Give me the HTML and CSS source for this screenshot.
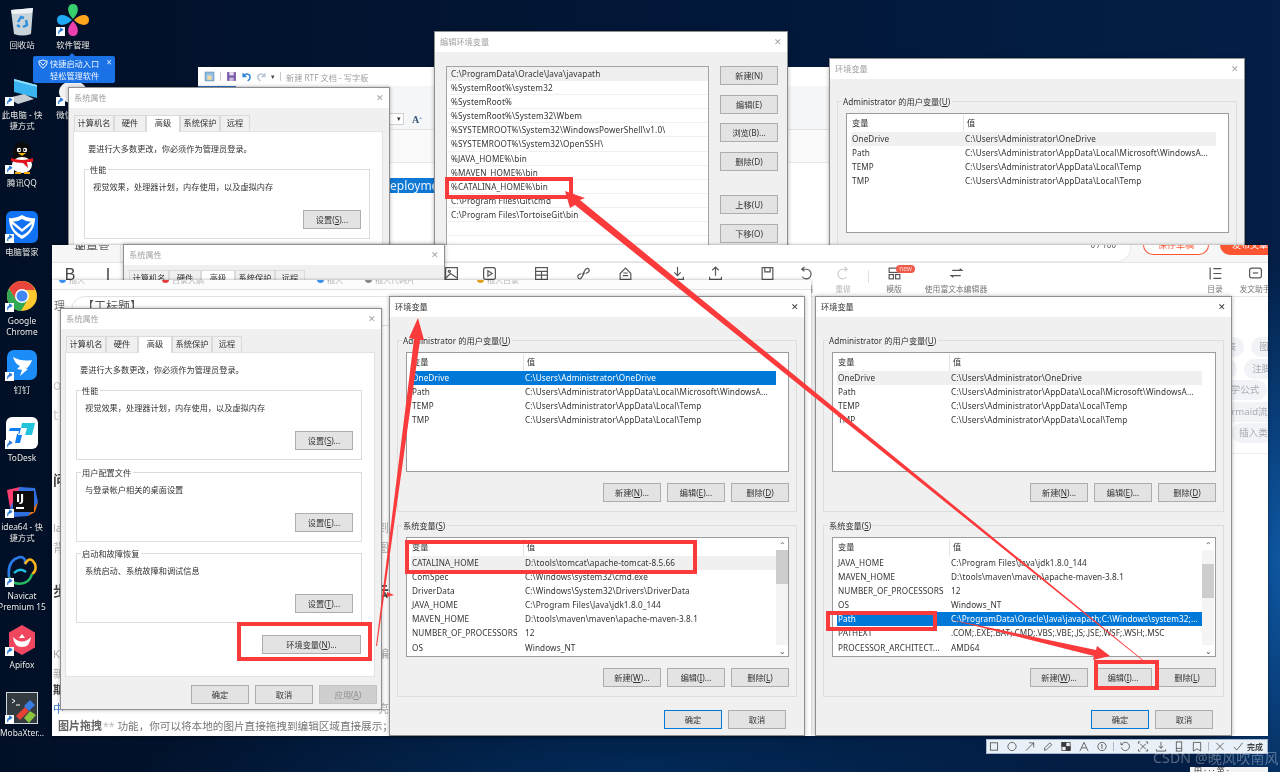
FILE: index.html
```html
<!DOCTYPE html>
<html lang="zh-CN">
<head>
<meta charset="utf-8">
<title>环境变量配置</title>
<link rel="stylesheet" href="styles.css">
</head>
<body>
<main class="desk">

<!-- desktop icons -->
<div class="di p-recycle"><svg class="ic" viewBox="0 0 32 32"><path d="M5 6 L27 4 L25 30 Q16 33 8 30 Z" fill="#c9d3da"/><path d="M5 6 L27 4 L26 9 L6 10 Z" fill="#eef2f5"/><path d="M12 18 L15 13 L18 14 M20 16 L21 21 L17 23 M14 23 L11 21" fill="none" stroke="#2f8fdc" stroke-width="2.4"/></svg><span>回收站</span></div>
<div class="di col2 p-soft"><svg class="ic" viewBox="0 0 32 32"><path d="M16 15 C9 8 10 0 16 0 C22 0 23 8 16 15Z" fill="#37cf6d"/><path d="M17 16 C24 9 32 10 32 16 C32 22 24 23 17 16Z" fill="#ffa51d"/><path d="M16 17 C23 24 22 32 16 32 C10 32 9 24 16 17Z" fill="#ee3fb0"/><path d="M15 16 C8 23 0 22 0 16 C0 10 8 9 15 16Z" fill="#1ea8f6"/></svg><svg class="sc" viewBox="0 0 10 10"><rect width="10" height="10" fill="#fff"/><path d="M3 8 V5 Q3 3 6 3 H5 M5 1 L8 3 L5 5Z" fill="#2a78d6" stroke="#2a78d6"/></svg><span>软件管理</span></div>
<div class="di p-pc"><svg class="ic" viewBox="0 0 32 32"><path d="M8 5 L31 11 V24 L8 18 Z" fill="#39b4f0"/><path d="M8 5 L31 11 V13 L8 7Z" fill="#8fdcff"/><path d="M2 24 L18 20 L28 25 L12 30Z" fill="#c5ccd2"/></svg><svg class="sc" viewBox="0 0 10 10"><rect width="10" height="10" fill="#fff"/><path d="M3 8 V5 Q3 3 6 3 H5 M5 1 L8 3 L5 5Z" fill="#2a78d6" stroke="#2a78d6"/></svg><span>此电脑 - 快<br>捷方式</span></div>
<div class="di col2 p-wx"><svg class="ic" viewBox="0 0 32 32"><ellipse cx="16" cy="18" rx="14" ry="11" fill="#f2f2f2"/><rect x="18" y="5" width="4" height="4" fill="#27c24c"/><rect x="26" y="5" width="4" height="4" fill="#27c24c"/></svg><svg class="sc" viewBox="0 0 10 10"><rect width="10" height="10" fill="#fff"/><path d="M3 8 V5 Q3 3 6 3 H5 M5 1 L8 3 L5 5Z" fill="#2a78d6" stroke="#2a78d6"/></svg><span>微信开发</span></div>
<div class="di p-qq"><svg class="ic" viewBox="0 0 32 32"><ellipse cx="16" cy="11" rx="9" ry="11" fill="#0b0b0b"/><ellipse cx="16" cy="23" rx="10" ry="8" fill="#fff"/><circle cx="13" cy="8" r="2.2" fill="#fff"/><circle cx="19" cy="8" r="2.2" fill="#fff"/><circle cx="13.5" cy="8" r="1" fill="#000"/><circle cx="18.5" cy="8" r="1" fill="#000"/><path d="M12 11 H20 L16 14Z" fill="#f6b400"/><path d="M5 16 Q16 20 27 16 L27 20 L21 20 L22 26 L17 21 Q10 21 5 19Z" fill="#e0141c"/><path d="M9 31 H15 M18 31 H24" stroke="#f6a800" stroke-width="2"/></svg><svg class="sc" viewBox="0 0 10 10"><rect width="10" height="10" fill="#fff"/><path d="M3 8 V5 Q3 3 6 3 H5 M5 1 L8 3 L5 5Z" fill="#2a78d6" stroke="#2a78d6"/></svg><span>腾讯QQ</span></div>
<div class="di p-mgr"><svg class="ic" viewBox="0 0 32 32"><rect width="32" height="32" rx="6" fill="#1173f3"/><path d="M16 4 Q22 8 29 7 Q29 21 16 28 Q3 21 3 7 Q10 8 16 4Z M16 8 Q11 11 7 10.5 L16 18 L25 10.5 Q21 11 16 8Z M6 13 Q7 20 16 24.500 Q25 20 26 13 L16 21Z" fill="#fff" fill-rule="evenodd"/></svg><svg class="sc" viewBox="0 0 10 10"><rect width="10" height="10" fill="#fff"/><path d="M3 8 V5 Q3 3 6 3 H5 M5 1 L8 3 L5 5Z" fill="#2a78d6" stroke="#2a78d6"/></svg><span>电脑管家</span></div>
<div class="di p-chrome"><svg class="ic" viewBox="0 0 32 32"><circle cx="16" cy="16" r="15" fill="#fdc92f"/><path d="M16 1 A15 15 0 0 0 3 8.500 L10 20 L16 10 H29 A15 15 0 0 0 16 1Z" fill="#e8453c"/><path d="M3 8.500 A15 15 0 0 0 15 31 L22 19 L10 20Z" fill="#31a853"/><circle cx="16" cy="16" r="7" fill="#fff"/><circle cx="16" cy="16" r="5.500" fill="#4285f4"/></svg><svg class="sc" viewBox="0 0 10 10"><rect width="10" height="10" fill="#fff"/><path d="M3 8 V5 Q3 3 6 3 H5 M5 1 L8 3 L5 5Z" fill="#2a78d6" stroke="#2a78d6"/></svg><span>Google<br>Chrome</span></div>
<div class="di p-ding"><svg class="ic" viewBox="0 0 32 32"><rect x="1" y="1" width="30" height="30" rx="7" fill="#1b8cf8"/><path d="M7 8 Q16 13 26 11 Q24 17 20 20 L22 20 L14 27 L16 21 L11 20 L14 17 Q9 15 7 8Z" fill="#fff"/></svg><svg class="sc" viewBox="0 0 10 10"><rect width="10" height="10" fill="#fff"/><path d="M3 8 V5 Q3 3 6 3 H5 M5 1 L8 3 L5 5Z" fill="#2a78d6" stroke="#2a78d6"/></svg><span>钉钉</span></div>
<div class="di p-todesk"><svg class="ic" viewBox="0 0 32 32"><rect width="32" height="32" rx="6" fill="#fff"/><path d="M16 6 H29 L26 18 H19 L21 11 H15Z" fill="#22c4dc"/><path d="M4 11 H15 L13.500 17 H11 L9 26 H14 L16 18 H12 L13 14 H3Z" fill="#0c7ff2"/></svg><svg class="sc" viewBox="0 0 10 10"><rect width="10" height="10" fill="#fff"/><path d="M3 8 V5 Q3 3 6 3 H5 M5 1 L8 3 L5 5Z" fill="#2a78d6" stroke="#2a78d6"/></svg><span>ToDesk</span></div>
<div class="di p-idea"><svg class="ic" viewBox="0 0 32 32"><path d="M1 4 L14 1 L20 8 L4 22Z" fill="#ff3d6e"/><path d="M14 1 L29 2 L32 16 L22 30 L8 31 L4 22Z" fill="#2f6fe0"/><path d="M22 30 L32 16 L29 26Z" fill="#f97a12"/><rect x="7" y="5" width="21" height="21" fill="#0c0c0c"/><text x="10" y="16" class="ij">IJ</text><rect x="10" y="21" width="8" height="2" fill="#fff"/></svg><svg class="sc" viewBox="0 0 10 10"><rect width="10" height="10" fill="#fff"/><path d="M3 8 V5 Q3 3 6 3 H5 M5 1 L8 3 L5 5Z" fill="#2a78d6" stroke="#2a78d6"/></svg><span>idea64 - 快<br>捷方式</span></div>
<div class="di p-nav"><svg class="ic" viewBox="0 0 32 32"><path d="M3 22 Q1 5 14 2 Q20 2 19 9" fill="none" stroke="#2a7be8" stroke-width="2.600"/><path d="M19 9 Q24 0 29 9 Q31 16 26 19" fill="none" stroke="#f8b31a" stroke-width="2.600"/><path d="M3 22 Q7 31 18 28 Q24 26 26 19" fill="none" stroke="#25b860" stroke-width="2.600"/><path d="M8 18 Q14 12 20 17" fill="none" stroke="#1fc4e4" stroke-width="2.400"/></svg><svg class="sc" viewBox="0 0 10 10"><rect width="10" height="10" fill="#fff"/><path d="M3 8 V5 Q3 3 6 3 H5 M5 1 L8 3 L5 5Z" fill="#2a78d6" stroke="#2a78d6"/></svg><span>Navicat<br>Premium 15</span></div>
<div class="di p-api"><svg class="ic" viewBox="0 0 32 32"><path d="M16 1 L29 8.500 V23.500 L16 31 L3 23.500 V8.500Z" fill="#f1465f"/><path d="M7 13 Q16 22 25 13 Q24 23 16 23 Q8 23 7 13Z M16 10 L19 14 L13 14Z" fill="#fff"/></svg><svg class="sc" viewBox="0 0 10 10"><rect width="10" height="10" fill="#fff"/><path d="M3 8 V5 Q3 3 6 3 H5 M5 1 L8 3 L5 5Z" fill="#2a78d6" stroke="#2a78d6"/></svg><span>Apifox</span></div>
<div class="di p-moba"><svg class="ic" viewBox="0 0 32 32"><rect x=".5" y=".5" width="31" height="31" fill="#333a40" stroke="#cfd4d8"/><path d="M6 7 L9 9 L6 11 M10 13 H14" fill="none" stroke="#fff"/><path d="M10 24 L19 15 L23 19 L14 28Z" fill="#e34234"/><path d="M18 14 L24 8 L29 13 L23 19Z" fill="#3a7de0"/><path d="M18 26 L24 19 L30 23 L23 31Z" fill="#8cc63f"/></svg><svg class="sc" viewBox="0 0 10 10"><rect width="10" height="10" fill="#fff"/><path d="M3 8 V5 Q3 3 6 3 H5 M5 1 L8 3 L5 5Z" fill="#2a78d6" stroke="#2a78d6"/></svg><span>MobaXter...</span></div>

<!-- tooltip -->
<aside class="tip">
  <svg class="tip-shield" viewBox="0 0 12 12"><path d="M6 1 Q8 2.500 11 2.500 Q11 8 6 11 Q1 8 1 2.500 Q4 2.500 6 1Z M3 4 L6 7.500 L9 4" fill="none" stroke="#fff" stroke-width="1.200"/></svg>
  <div class="tip-text">快捷启动入口<br>轻松管理软件</div>
  <span class="tip-x">×</span>
</aside>

<!-- wordpad -->
<section class="wordpad">
  <header class="wp-title">
    <svg class="wp-ic" viewBox="0 0 10 10"><rect x="1" y="1" width="8" height="8" fill="#8ec0e8" stroke="#6b8fae" stroke-width=".7"/><rect x="3" y="4" width="4" height="4" fill="#f1d9a8"/></svg>
    <i class="wp-sep"></i>
    <svg class="wp-ic" viewBox="0 0 10 10"><rect x="1" y="1" width="8" height="8" fill="#7a5aa8"/><rect x="3" y="1" width="4" height="3" fill="#e8e2f2"/><rect x="3" y="6" width="4" height="3" fill="#c8bedc"/></svg>
    <svg class="wp-ic" viewBox="0 0 10 10"><path d="M2 2 V5 H5 M2 5 Q5 1 8 4 Q9 7 6 9" fill="none" stroke="#2c83d8" stroke-width="1.400"/></svg>
    <svg class="wp-ic" viewBox="0 0 10 10"><path d="M8 2 V5 H5 M8 5 Q5 1 2 4 Q1 7 4 9" fill="none" stroke="#b9c8d8" stroke-width="1.400"/></svg>
    <span class="wp-down">▾</span><i class="wp-sep"></i>
    <span class="wp-name">新建 RTF 文档 - 写字板</span>
  </header>
  <div class="wp-tabs"><i class="wp-file"></i></div>
  <div class="wp-ribbon"><span class="wp-fontbox">▾</span><span class="wp-a">A<sup>+</sup></span></div>
  <div class="wp-ruler"></div>
  <div class="wp-doc"><span class="wp-sel">eployment</span></div>
</section>

<!-- back system properties -->
<section class="win sys sys-back">
  <header class="win-title dim"><span>系统属性</span><span class="x">✕</span></header>
  <div class="tabs"><span>计算机名</span><span class="t2">硬件</span><span class="on">高级</span><span>系统保护</span><span class="t3">远程</span></div>
  <div class="panel">
    <p class="intro">要进行大多数更改，你必须作为管理员登录。</p>
    <div class="grp"><span class="lg">性能</span><p>视觉效果，处理器计划，内存使用，以及虚拟内存</p><button class="btn">设置(<u>S</u>)...</button></div>
  </div>
</section>

<!-- edit env -->
<section class="win edit">
  <header class="win-title dim"><span>编辑环境变量</span><span class="x">✕</span></header>
  <div class="edit-body">
    <div class="edit-list">
      <div class="er cur">C:\ProgramData\Oracle\Java\javapath</div>
      <div class="er">%SystemRoot%\system32</div>
      <div class="er">%SystemRoot%</div>
      <div class="er">%SystemRoot%\System32\Wbem</div>
      <div class="er">%SYSTEMROOT%\System32\WindowsPowerShell\v1.0\</div>
      <div class="er">%SYSTEMROOT%\System32\OpenSSH\</div>
      <div class="er">%JAVA_HOME%\bin</div>
      <div class="er">%MAVEN_HOME%\bin</div>
      <div class="er">%CATALINA_HOME%\bin</div>
      <div class="er">C:\Program Files\Git\cmd</div>
      <div class="er">C:\Program Files\TortoiseGit\bin</div>
      <div class="er"></div>
      <div class="er"></div>
    </div>
    <div class="edit-btns">
      <button class="btn">新建(N)</button>
      <button class="btn">编辑(E)</button>
      <button class="btn">浏览(B)...</button>
      <button class="btn">删除(D)</button>
      <button class="btn gap-up">上移(U)</button>
      <button class="btn">下移(O)</button>
    </div>
  </div>
</section>

<!-- back env -->
<section class="win env env-back">
  <header class="win-title dim"><span>环境变量</span><span class="x">✕</span></header>
  <div class="env-body">
    <div class="grp2"><span class="lg">Administrator 的用户变量(<u>U</u>)</span>
      <div class="list">
        <div class="rows">
          <div class="r head"><span>变量</span><span>值</span></div>
          <div class="r cur"><span>OneDrive</span><span>C:\Users\Administrator\OneDrive</span></div>
          <div class="r"><span>Path</span><span>C:\Users\Administrator\AppData\Local\Microsoft\WindowsA...</span></div>
          <div class="r"><span>TEMP</span><span>C:\Users\Administrator\AppData\Local\Temp</span></div>
          <div class="r"><span>TMP</span><span>C:\Users\Administrator\AppData\Local\Temp</span></div>
        </div>
      </div>
    </div>
  </div>
</section>

<!-- editor window behind -->
<section class="editor">
  <div class="ed-top">
    <span class="ed-crumb">文章管理</span>
    <div class="ed-title"><span class="ed-count">0 / 100</span></div>
    <span class="ed-draft">保存草稿</span>
    <span class="ed-pub">发布文章</span>
  </div>
  <div class="tools">
    <div class="tool w38 big">B</div>
    <div class="tool w38 big">I</div>
    <div class="tool w38 g2"><svg viewBox="0 0 14 14"><rect x="1.500" y="1.500" width="11" height="11"/><circle cx="5" cy="5" r="1"/><path d="M2 11 L6 7 L12 11"/></svg><span>图片</span></div>
    <div class="tool w38"><svg viewBox="0 0 14 14"><rect x="1.500" y="1.500" width="11" height="11" rx="2"/><path d="M5.500 4.500 L9.500 7 L5.500 9.500Z"/></svg><span>视频</span></div>
    <div class="tool w42 g3"><svg viewBox="0 0 14 14"><rect x="1.500" y="1.500" width="11" height="11"/><path d="M1.500 5 H12.500 M1.500 8.500 H12.500 M7 5 V12.500"/></svg><span>表格</span></div>
    <div class="tool w42"><svg viewBox="0 0 14 14"><path d="M6 8 L9 3 Q11 1.500 12 3 Q13 5 11 6 L9 7 M8 6 L5 11 Q3 13 2 11 Q1 9 3 8 L5 7"/></svg><span>链接</span></div>
    <div class="tool w42"><svg viewBox="0 0 14 14"><path d="M2 7 L7 2 L12 7 V12.500 H2Z M4.500 9 H9.500 M5 6.500 H9"/></svg><span>摘要</span></div>
    <div class="tool w38 g3"><svg viewBox="0 0 14 14"><path d="M7 1 V9 M4 6 L7 9 L10 6 M1.500 10 V12.500 H12.500 V10"/></svg><span>导入</span></div>
    <div class="tool w38"><svg viewBox="0 0 14 14"><path d="M7 9 V1 M4 4 L7 1 L10 4 M1.500 10 V12.500 H12.500 V10"/></svg><span>导出</span></div>
    <div class="tool w38 g4"><svg viewBox="0 0 14 14"><rect x="2" y="1.500" width="10" height="11"/><path d="M4.500 1.500 V5.500 H9.500 V1.500"/></svg><span>保存</span></div>
    <div class="tool w38"><svg viewBox="0 0 14 14"><path d="M4 3 H8 A4.500 4.500 0 1 1 4 10 M6 1 L3.500 3 L6 5"/></svg><span>撤销</span></div>
    <div class="tool w38 off"><svg viewBox="0 0 14 14"><path d="M10 3 H6 A4.500 4.500 0 1 0 10 10 M8 1 L10.500 3 L8 5"/></svg><span>重做</span></div>
    <i class="tool-sep"></i>
    <div class="tool w40 badge-wrap"><svg viewBox="0 0 14 14"><rect x="2" y="2" width="10" height="4"/><rect x="2" y="8" width="4" height="4"/><rect x="8" y="8" width="4" height="4"/></svg><span>模版</span><b class="badge">new</b></div>
    <div class="tool w84"><svg viewBox="0 0 14 14"><path d="M3 4 H12 L10 2.500 M11 9 H2 L4 10.500"/></svg><span>使用富文本编辑器</span></div>
    <div class="tool w40 push"><svg viewBox="0 0 14 14"><path d="M2 1.500 V12.500 M5 2.500 H12.500 M5 7 H12.500 M5 11.500 H12.500"/></svg><span>目录</span></div>
    <div class="tool w40 last"><svg viewBox="0 0 14 14"><rect x="1.500" y="2" width="11" height="9" rx="2"/><path d="M4.500 6.500 H9.500"/></svg><span>发文助手</span></div>
  </div>
  <div class="chips">
    <div class="chip-row cr1"><span class="chip">图表</span><span class="chip">图片</span></div>
    <div class="chip-row cr2"><span class="chip">脚注</span><span class="chip">注脚</span></div>
    <div class="chip-row cr3"><span class="chip">数学公式</span></div>
    <div class="chip-row cr4"><span class="chip">mermaid流程图</span></div>
    <div class="chip-row cr5"><span class="chip">插入类</span></div>
    <hr class="chip-hr">
  </div>
</section>

<!-- mid system properties -->
<section class="win sys sys-mid">
  <header class="win-title dim"><span>系统属性</span><span class="x">✕</span></header>
  <div class="tabs"><span>计算机名</span><span class="t2">硬件</span><span class="on">高级</span><span>系统保护</span><span class="t3">远程</span></div>
</section>

<!-- editor layer in front -->
<section class="editor2">
  <div class="e2-strip">
    <span class="s1"><i class="dot blue"></i>插入</span>
    <span class="s2"><i class="dot red"></i>目录大纲</span>
    <span class="s3"><i class="dot blue"></i>插入</span>
    <span class="s4"><i class="dot gray"></i>插入代码片</span>
    <span class="s5"><i class="dot gold"></i>插入目录</span>
  </div>
  <div class="e2-head"><span class="e2-crumb">理</span><div class="e2-input">【工标题】</div></div>
  <div class="doc">
    <div class="dl d1"><span>oC</span></div>
    <div class="dl d2"><span>t</span></div>
    <div class="dl d3"><b>问</b></div>
    <div class="dl d4"><span>la</span><span>到</span></div>
    <div class="dl d5"><span>背</span><span>图</span></div>
    <div class="dl d6"><b>步</b><b>云</b></div>
    <div class="dl d7"><span>Ko</span><span>编</span></div>
    <div class="dl d8"><span>新</span></div>
    <div class="dl d9"><b>期</b></div>
    <div class="dl d10"><span class="lnk">中</span><span>亮</span></div>
    <div class="dl-last"><b>图片拖拽</b><span class="ast">**</span> 功能，你可以将本地的图片直接拖拽到编辑区域直接展示；</div>
  </div>
</section>

<!-- front system properties -->
<section class="win sys sys-front">
  <header class="win-title dim"><span>系统属性</span><span class="x">✕</span></header>
  <div class="tabs"><span>计算机名</span><span class="t2">硬件</span><span class="on">高级</span><span>系统保护</span><span class="t3">远程</span></div>
  <div class="panel">
    <p class="intro">要进行大多数更改，你必须作为管理员登录。</p>
    <div class="grp"><span class="lg">性能</span><p>视觉效果，处理器计划，内存使用，以及虚拟内存</p><button class="btn">设置(<u>S</u>)...</button></div>
    <div class="grp"><span class="lg">用户配置文件</span><p>与登录帐户相关的桌面设置</p><button class="btn">设置(<u>E</u>)...</button></div>
    <div class="grp"><span class="lg">启动和故障恢复</span><p>系统启动、系统故障和调试信息</p><button class="btn">设置(<u>T</u>)...</button></div>
    <button class="btn btn-env">环境变量(<u>N</u>)...</button>
  </div>
  <div class="foot"><button class="btn">确定</button><button class="btn">取消</button><button class="btn dis">应用(<u>A</u>)</button></div>
</section>

<!-- env A -->
<section class="win env env-a">
  <header class="win-title"><span>环境变量</span><span class="x">✕</span></header>
  <div class="env-body">
    <div class="grp2"><span class="lg">Administrator 的用户变量(<u>U</u>)</span>
      <div class="list"><div class="rows">
        <div class="r head"><span>变量</span><span>值</span></div>
        <div class="r sel"><span>OneDrive</span><span>C:\Users\Administrator\OneDrive</span></div>
        <div class="r"><span>Path</span><span>C:\Users\Administrator\AppData\Local\Microsoft\WindowsA...</span></div>
        <div class="r"><span>TEMP</span><span>C:\Users\Administrator\AppData\Local\Temp</span></div>
        <div class="r"><span>TMP</span><span>C:\Users\Administrator\AppData\Local\Temp</span></div>
      </div></div>
      <div class="btns"><button class="btn">新建(<u>N</u>)...</button><button class="btn">编辑(<u>E</u>)...</button><button class="btn">删除(<u>D</u>)</button></div>
    </div>
    <div class="grp2"><span class="lg">系统变量(<u>S</u>)</span>
      <div class="list"><div class="rows">
        <div class="r head"><span>变量</span><span>值</span></div>
        <div class="r cur"><span>CATALINA_HOME</span><span>D:\tools\tomcat\apache-tomcat-8.5.66</span></div>
        <div class="r"><span>ComSpec</span><span>C:\Windows\system32\cmd.exe</span></div>
        <div class="r"><span>DriverData</span><span>C:\Windows\System32\Drivers\DriverData</span></div>
        <div class="r"><span>JAVA_HOME</span><span>C:\Program Files\Java\jdk1.8.0_144</span></div>
        <div class="r"><span>MAVEN_HOME</span><span>D:\tools\maven\maven\apache-maven-3.8.1</span></div>
        <div class="r"><span>NUMBER_OF_PROCESSORS</span><span>12</span></div>
        <div class="r"><span>OS</span><span>Windows_NT</span></div>
      </div>
      <div class="sb"><span class="sb-a">⌃</span><div class="sb-track"><i class="thumb"></i></div><span class="sb-a">⌄</span></div></div>
      <div class="btns"><button class="btn">新建(<u>W</u>)...</button><button class="btn">编辑(<u>I</u>)...</button><button class="btn">删除(<u>L</u>)</button></div>
    </div>
    <div class="foot2"><button class="btn def">确定</button><button class="btn">取消</button></div>
  </div>
</section>

<!-- env B -->
<section class="win env env-b">
  <header class="win-title"><span>环境变量</span><span class="x">✕</span></header>
  <div class="env-body">
    <div class="grp2"><span class="lg">Administrator 的用户变量(<u>U</u>)</span>
      <div class="list"><div class="rows">
        <div class="r head"><span>变量</span><span>值</span></div>
        <div class="r cur"><span>OneDrive</span><span>C:\Users\Administrator\OneDrive</span></div>
        <div class="r"><span>Path</span><span>C:\Users\Administrator\AppData\Local\Microsoft\WindowsA...</span></div>
        <div class="r"><span>TEMP</span><span>C:\Users\Administrator\AppData\Local\Temp</span></div>
        <div class="r"><span>TMP</span><span>C:\Users\Administrator\AppData\Local\Temp</span></div>
      </div></div>
      <div class="btns"><button class="btn">新建(<u>N</u>)...</button><button class="btn">编辑(<u>E</u>)...</button><button class="btn">删除(<u>D</u>)</button></div>
    </div>
    <div class="grp2"><span class="lg">系统变量(<u>S</u>)</span>
      <div class="list"><div class="rows">
        <div class="r head"><span>变量</span><span>值</span></div>
        <div class="r"><span>JAVA_HOME</span><span>C:\Program Files\Java\jdk1.8.0_144</span></div>
        <div class="r"><span>MAVEN_HOME</span><span>D:\tools\maven\maven\apache-maven-3.8.1</span></div>
        <div class="r"><span>NUMBER_OF_PROCESSORS</span><span>12</span></div>
        <div class="r"><span>OS</span><span>Windows_NT</span></div>
        <div class="r sel"><span>Path</span><span>C:\ProgramData\Oracle\Java\javapath;C:\Windows\system32;...</span></div>
        <div class="r"><span>PATHEXT</span><span>.COM;.EXE;.BAT;.CMD;.VBS;.VBE;.JS;.JSE;.WSF;.WSH;.MSC</span></div>
        <div class="r"><span>PROCESSOR_ARCHITECT...</span><span>AMD64</span></div>
      </div>
      <div class="sb"><span class="sb-a">⌃</span><div class="sb-track sb-mid"><i class="thumb"></i></div><span class="sb-a">⌄</span></div></div>
      <div class="btns"><button class="btn">新建(<u>W</u>)...</button><button class="btn">编辑(<u>I</u>)...</button><button class="btn">删除(<u>L</u>)</button></div>
    </div>
    <div class="foot2"><button class="btn def">确定</button><button class="btn">取消</button></div>
  </div>
</section>

<!-- screenshot toolbar -->
<div class="shot">
  <svg viewBox="0 0 12 12"><rect x="2" y="2" width="8" height="8"/></svg>
  <svg viewBox="0 0 12 12"><circle cx="6" cy="6" r="4.500"/></svg>
  <svg viewBox="0 0 12 12"><path d="M1.500 10.500 L10 2 M5 2 H10 V7"/></svg>
  <svg viewBox="0 0 12 12"><path d="M2 10 L2.500 7.500 L8 2 L10 4 L4.500 9.500Z"/></svg>
  <svg viewBox="0 0 12 12"><rect x="1.500" y="1.500" width="9" height="9"/><rect x="1.500" y="1.500" width="4.500" height="4.500" class="fill"/><rect x="6" y="6" width="4.500" height="4.500" class="fill"/></svg>
  <svg viewBox="0 0 12 12"><path d="M1.500 11 L6 1.500 L10.500 11 M3.500 7.500 H8.500"/></svg>
  <svg viewBox="0 0 12 12"><circle cx="6" cy="6" r="4.500"/><path d="M5 4.500 L6 3.800 V8.500"/></svg>
  <i class="shot-sep"></i>
  <svg viewBox="0 0 12 12"><path d="M3 3 A4.500 4.500 0 1 1 2 7 M1.500 1.500 V4 H4"/></svg>
  <svg viewBox="0 0 12 12"><path d="M1 3 V1 H3 M9 1 H11 V3 M1 9 V11 H3 M11 9 V11 H9 M3 3 L9 9 M9 3 L3 9"/></svg>
  <svg viewBox="0 0 12 12"><path d="M6 1 V8 M3.500 5.500 L6 8 L8.500 5.500 M1 9 V11 H11 V9"/></svg>
  <svg viewBox="0 0 12 12"><rect x="3" y="1" width="6" height="10"/><path d="M3 8 H9"/></svg>
  <svg viewBox="0 0 12 12"><path d="M2 1.500 H10 V11 L6 8.500 L2 11Z"/></svg>
  <i class="shot-sep"></i>
  <svg viewBox="0 0 12 12"><path d="M2 2 L10 10 M10 2 L2 10"/></svg>
  <svg viewBox="0 0 12 12"><path d="M1.500 6.500 L4.500 10 L11 2"/></svg>
  <span class="shot-done">完成</span>
</div>
<div class="taskbit"><span>田 · · · 第 ·</span></div>
<div class="mark">CSDN @晚风吹南风</div>

<!-- annotations -->
<svg class="marks" viewBox="0 0 1280 772">
  <g class="box">
    <rect x="447" y="179" width="124" height="18"/>
    <rect x="407" y="542" width="288" height="30"/>
    <rect x="239" y="624" width="131" height="35"/>
    <rect x="828" y="613" width="107" height="16"/>
    <rect x="1096" y="662" width="61" height="26"/>
  </g>
  <g class="arrow">
    <polygon points="376,646 377,646 420,340 424,340 418,318 409,338 414,339"/>
    <polygon points="1143,660 1142.500,660.500 575,205 570,208 565,191 585,198 580,200"/>
    <polygon points="948,619 1096,650 1097,646 1110,656 1093,660 1094,656"/>
    <polygon points="387,592 394,595 387,597"/>
  </g>
</svg>

</main>
</body>
</html>
```

FILE: styles.css
```css
* { box-sizing: border-box; }
html, body { margin: 0; padding: 0; }
body { background: #02132e; }
u { text-decoration: underline; }

.desk {
  position: relative;
  width: 1280px;
  height: 772px;
  overflow: hidden;
  font-family: "Noto Sans", "Noto Sans CJK SC", sans-serif;
  font-size: 8.2px;
  color: #333;
  filter: blur(.4px);
  background:
    radial-gradient(120px 300px at 1290px 560px, #0f5ba8 0%, rgba(15,91,168,0) 100%),
    radial-gradient(500px 80px at 640px 772px, #022a58 0%, rgba(2,42,88,0) 100%),
    linear-gradient(90deg, #021027 0%, #02183a 60%, #031f47 100%);
}

/* desktop icons */
.di {
  position: absolute;
  left: -1px;
  width: 46px;
  display: flex;
  flex-direction: column;
  align-items: center;
  color: #e8edf2;
  font-size: 8.4px;
  line-height: 11.4px;
  text-align: center;
  white-space: nowrap;
  text-shadow: 0 0 2px #000;
}
.di .ic { width: 32px; height: 32px; margin-bottom: 3px; }
.di .sc { position: absolute; left: 6px; top: 23px; width: 9px; height: 9px; }
.col2 { left: 50px; }
.p-recycle { top: 4px; }
.p-soft { top: 4px; }
.p-pc { top: 74px; }
.p-wx { top: 74px; }
.p-qq { top: 142px; }
.p-mgr { top: 211px; }
.p-chrome { top: 280px; }
.p-ding { top: 349px; }
.p-todesk { top: 417px; }
.p-idea { top: 486px; }
.p-nav { top: 555px; }
.p-api { top: 624px; }
.p-moba { top: 692px; }
.ij { font: 700 11px "DejaVu Sans", sans-serif; fill: #fff; }

.tip {
  position: absolute;
  left: 33px;
  top: 56px;
  width: 82px;
  height: 27px;
  z-index: 2;
  background: #1a72e6;
  border-radius: 2px;
  color: #eef5ff;
  font-size: 8.2px;
  line-height: 12px;
  display: flex;
  padding: 2px 0 0 5px;
}
.tip::before {
  content: "";
  position: absolute;
  left: 36px;
  top: -3px;
  border: 3px solid transparent;
  border-top: 0;
  border-bottom-color: #1a72e6;
}
.tip-shield { width: 10px; height: 10px; flex: none; margin: 1px 2px 0 0; }
.tip-x { position: absolute; right: 3px; top: 1px; font-size: 10px; line-height: 10px; color: #cfe2ff; }

/* wordpad */
.wordpad {
  position: absolute;
  left: 198px;
  top: 67px;
  width: 640px;
  height: 178px;
  z-index: 1;
  background: #fff;
  overflow: hidden;
}
.wp-title { height: 19px; display: flex; align-items: center; padding-left: 6px; gap: 4px; color: #999; }
.wp-ic { width: 11px; height: 11px; }
.wp-sep { width: 1px; height: 9px; background: #c8c8c8; margin: 0 1px; }
.wp-down { font-size: 7px; color: #444; }
.wp-name { font-size: 8.2px; color: #a0a0a0; }
.wp-tabs { height: 2px; background: #f5f6f7; }
.wp-file { display: block; width: 38px; height: 2px; background: #2a6fc0; }
.wp-ribbon { height: 42px; background: #f5f6f7; border-bottom: 1px solid #e2e2e2; display: flex; align-items: flex-end; padding: 0 0 4px 190px; gap: 8px; position: relative; }
.wp-fontbox { width: 16px; height: 12px; background: #fff; border: 1px solid #d0d0d0; border-left: 0; font-size: 7px; line-height: 10px; text-align: right; padding-right: 2px; margin-left: 0; }
.wp-a { font: 700 10px "Liberation Serif", serif; color: #35536f; margin-left: 0; }
.wp-a sup { font-size: 5px; color: #2c83d8; }
.wp-ruler { height: 33px; background: #fafafa; border-bottom: 1px solid #e8e8e8; }
.wp-doc { padding: 15px 0 0 180px; }
.wp-sel { display: block; width: 60px; margin-left: 0; height: 15px; background: #0f78d4; color: #eaf4ff; font-size: 12px; line-height: 15px; padding-left: 12px; overflow: hidden; white-space: nowrap; }

/* generic window */
.win {
  position: absolute;
  background: #f0f0f0;
  border: 1px solid #8f8f8f;
  box-shadow: 0 0 4px rgba(0,0,0,.3);
  display: flex;
  flex-direction: column;
  overflow: hidden;
}
.win-title {
  flex: none;
  height: 20px;
  background: #fff;
  display: flex;
  align-items: center;
  justify-content: space-between;
  padding: 0 5px 2px;
  color: #333;
  font-size: 8.2px;
}
.win-title .x { font-size: 9px; color: #333; }
.win-title.dim, .win-title.dim .x { color: #a2a2a2; }

.btn {
  flex: none;
  width: 58px;
  height: 19px;
  padding: 0;
  margin: 0;
  background: #e3e3e3;
  border: 1px solid #adadad;
  color: #333;
  font: inherit;
  line-height: 17px;
  white-space: nowrap;
}

/* system properties */
.sys { width: 322px; }
.sys-back { left: 68px; top: 87px; height: 180px; z-index: 3; }
.sys-mid { left: 123px; top: 244px; height: 60px; z-index: 7; }
.sys-mid .tabs { height: 21px; padding-top: 5px; }
.sys-front { left: 60px; top: 308px; height: 402px; z-index: 9; }
.tabs {
  flex: none;
  display: flex;
  align-items: flex-end;
  height: 23px;
  padding: 7px 0 0 5px;
  margin-left: 0;
  color: #333;
}
.tabs span {
  width: 40px;
  height: 16px;
  line-height: 14px;
  text-align: center;
  background: #f0f0f0;
  border: 1px solid #dadada;
  border-bottom: 0;
}
.tabs .t2 { width: 32px; }
.tabs .t3 { width: 30px; }
.tabs .on { width: 34px; height: 17px; background: #fff; position: relative; z-index: 1; margin-bottom: -1px; }
.panel {
  flex: none;
  width: 310px;
  height: 325px;
  margin-left: 4px;
  background: #fff;
  border: 1px solid #e2e2e2;
  padding: 11px 12px 0 10px;
  display: flex;
  flex-direction: column;
}
.intro { margin: 0 0 14px 4px; line-height: 12px; }
.grp {
  position: relative;
  flex: none;
  height: 70px;
  margin-bottom: 11.500px;
  border: 1px solid #dcdcdc;
  padding: 11px 8px 9px 8px;
  display: flex;
  flex-direction: column;
  justify-content: space-between;
  align-items: flex-start;
}
.grp p { margin: 0; line-height: 11px; }
.grp .btn { align-self: flex-end; }
.lg {
  position: absolute;
  left: 4px;
  top: -6px;
  line-height: 11px;
  padding: 0 2px 0 1px;
  background: inherit;
}
.panel .lg { background: #fff; }
.btn-env { width: 99px; align-self: flex-end; margin-right: 1px; }
.foot { display: flex; justify-content: flex-end; gap: 6px; padding: 8px 4px 0 0; }
.dis { background: #cfcfcf; border-color: #c4c4c4; color: #8d8d8d; }

/* edit env window */
.edit { left: 434px; top: 31px; width: 354px; height: 240px; z-index: 3; }
.edit-body { display: flex; padding: 14px 9px 0 11px; gap: 11px; }
.edit-list { width: 264px; height: 180px; background: #fff; border: 1px solid #a4a4a4; overflow: hidden; }
.er { height: 14.1px; line-height: 13px; padding-left: 4px; border-bottom: 1px solid #f0f0f0; white-space: nowrap; letter-spacing: .13px; }
.er.cur { background: #f0f0f0; }
.edit-btns { display: flex; flex-direction: column; }
.edit-btns .btn { margin-bottom: 9.5px; }
.edit-btns .gap-up { margin-top: 15px; }

/* env windows */
.env { width: 416px; height: 440px; }
.env-back { left: 829px; top: 58px; height: 240px; z-index: 3; }
.env-a { left: 389px; top: 296px; z-index: 9; }
.env-b { left: 815px; top: 296px; width: 417px; z-index: 9; }
.env-body { padding: 23px 7px 0 7px; }
.env-back .env-body { padding-top: 22px; }
.grp2 {
  position: relative;
  height: 172px;
  margin-bottom: 13px;
  border: 1px solid #dddddd;
  padding: 11px 7px 0 8px;
  background: #f0f0f0;
}
.list {
  display: flex;
  height: 120px;
  background: #fff;
  border: 1px solid #9c9c9c;
  padding: 1px 0 0 4px;
  overflow: hidden;
}
.rows { width: 365px; flex: none; }
.r { display: grid; grid-template-columns: 113px 1fr; height: 14.2px; line-height: 14px; white-space: nowrap; letter-spacing: .1px; }
.r span { padding-left: 1px; overflow: hidden; }
.r.head { height: 16.500px; line-height: 15px; }
.r.head span:first-child { border-right: 1px solid #e4e4e4; }
.r.head span + span { padding-left: 3px; }
.r.cur { background: #f0f0f0; }
.r.sel { background: #0078d7; color: #fff; }
.sb { width: 12px; margin-left: 0; display: flex; flex-direction: column; align-items: center; background: #fff; }
.sb-a { height: 11px; line-height: 11px; font-size: 8px; color: #555; flex: none; }
.sb-track { flex: 1; width: 100%; padding-top: 0; background: #f4f4f4; display: flex; flex-direction: column; }
.sb-mid { padding-top: 14px; }
.thumb { display: block; width: 100%; height: 34px; background: #cdcdcd; }
.btns { display: flex; justify-content: flex-end; gap: 6px; margin-top: 11px; }
.foot2 { display: flex; justify-content: flex-end; gap: 6px; padding-right: 11px; margin-top: 0; }
.def { border: 1.500px solid #0078d7; }

/* CSDN editor */
.editor {
  position: absolute;
  left: 52px;
  top: 245px;
  width: 1216px;
  height: 491px;
  z-index: 5;
  background: #fff;
  overflow: hidden;
  box-shadow: 0 0 3px rgba(0,0,0,.4);
}
.ed-top {
  height: 18px;
  display: flex;
  align-items: flex-start;
  background: #f7f7f7;
  border-bottom: 1px solid #e4e4e4;
  padding-left: 22px;
  color: #666;
  font-size: 12px;
}
.ed-crumb { height: 5px; overflow: hidden; line-height: 3px; width: 46px; flex: none; }
.ed-title {
  width: 1011px;
  flex: none;
  height: 17px;
  background: #fff;
  border-radius: 0 0 14px 0;
  border: 1px solid #e8e8e8;
  border-top: 0;
  display: flex;
  justify-content: flex-end;
  align-items: flex-start;
  padding-right: 14px;
  overflow: hidden;
  font-size: 8px;
  line-height: 0;
  color: #555;
}
.ed-draft {
  width: 66px;
  height: 10px;
  margin-left: 12px;
  flex: none;
  overflow: hidden;
  border: 1px solid #fc5531;
  border-top: 0;
  border-radius: 0 0 14px 14px;
  background: #fff;
  color: #fc5531;
  text-align: center;
  font-size: 9px;
  line-height: 0;
}
.ed-pub {
  width: 60px;
  height: 10px;
  margin-left: 11px;
  flex: none;
  overflow: hidden;
  background: #fc5531;
  border-radius: 0 0 0 14px;
  color: #fff;
  text-align: center;
  font-size: 9px;
  line-height: 0;
}
.tools { display: flex; height: 34px; border-bottom: 1px solid #eaeaea; padding-top: 3px; }
.tool {
  position: relative;
  flex: none;
  display: flex;
  flex-direction: column;
  align-items: center;
  gap: 3px;
  color: #777;
  font-size: 7.800px;
  line-height: 10px;
  white-space: nowrap;
}
.tool svg { width: 15px; height: 15px; fill: none; stroke: #555; stroke-width: 1.100; }
.tool.off { color: #bbb; }
.tool.off svg { stroke: #ccc; }
.tool.big { font: 400 16px "Liberation Sans", sans-serif; color: #444; line-height: 18px; padding-right: 2px; }
.w38 { width: 38px; }
.w40 { width: 40px; }
.w42 { width: 42px; }
.w84 { width: 84px; }
.g2 { margin-left: 304px; }
.g3 { margin-left: 12px; }
.g4 { margin-left: 14px; }
.tool-sep { width: 1px; height: 13px; background: #e0e0e0; margin: 4px 5px 0 6px; }
.push { margin-left: auto; }
.last { margin-right: -7px; }
.badge {
  position: absolute;
  left: 22px;
  top: -1px;
  width: 19px;
  height: 8px;
  background: #ef5a4a;
  border-radius: 4px;
  color: #ffd9d0;
  font: 400 6.500px/8px "Noto Sans", sans-serif;
  text-align: center;
}
.chips { margin: 40px 0 0 1170px; width: 60px; height: 300px; overflow: hidden; color: #a8acb2; font-size: 9.600px; }
.chip-row { display: flex; gap: 7px; height: 20px; margin-bottom: 1.500px; white-space: nowrap; }
.chip { flex: none; background: #f1f3f6; border-radius: 10px; padding: 0 8px; line-height: 20px; }
.cr1 { margin-left: -13px; }
.cr2 { margin-left: -20px; }
.cr3 { margin-left: -9px; }
.cr4 { margin-left: -13px; }
.cr5 { margin-left: 9px; }
.chip-hr { margin: 10px 0 0 -10px; border: 0; border-top: 1px solid #eee; }

/* editor layer in front */
.editor2 {
  position: absolute;
  left: 52px;
  top: 280px;
  width: 759px;
  height: 456px;
  z-index: 8;
  background: #fff;
  box-shadow: 0 0 3px rgba(0,0,0,.35);
  overflow: hidden;
}
.e2-strip { display: flex; height: 10px; background: #fcfcfc; border-bottom: 1px solid #e2e2e2; overflow: hidden; padding-left: 7px; color: #b5b5b5; line-height: 0; font-size: 8px; white-space: nowrap; }
.e2-strip span { flex: none; }
.s1 { width: 103px; }
.s2 { width: 155px; }
.s3 { width: 48px; }
.s4 { width: 112px; }
.dot { display: inline-block; width: 7px; height: 7px; border-radius: 50%; margin: -4px 3px 0 0; vertical-align: top; }
.blue { background: #3a8ff0; }
.red { background: #e23c3c; }
.gray { background: #888; }
.gold { background: #e0a020; }
.e2-head { display: flex; align-items: flex-start; height: 30px; padding: 6px 0 0 2px; gap: 6px; font-size: 11px; color: #777; }
.e2-crumb { line-height: 20px; }
.e2-input { width: 600px; height: 30px; border: 1px solid #e2e2e2; border-radius: 14px 0 0 0; padding-left: 10px; line-height: 20px; font-size: 12px; color: #555; }
.doc { width: 337px; padding-left: 1px; color: #aaa; font-size: 11px; line-height: 13px; }
.dl { display: flex; justify-content: space-between; height: 13px; white-space: nowrap; }
.dl b { color: #444; font-weight: 700; }
.d1 { margin-top: 58px; font-size: 14px; color: #ccc; }
.d2 { margin-top: 17px; font-size: 14px; color: #ccc; }
.d3 { margin-top: 52px; font-size: 14px; }
.d4 { margin-top: 35px; }
.d5 { margin-top: 7px; }
.d6 { margin-top: 30px; font-size: 14px; }
.d7 { margin-top: 50px; }
.d8 { margin-top: 7px; }
.d9 { margin-top: 3px; }
.d10 { margin-top: 6px; }
.lnk { color: #3a78d0; }
.dl-last { margin-top: 4px; margin-left: 5px; width: 335px; font-size: 10.600px; line-height: 14px; color: #777; white-space: nowrap; }
.dl-last b { font-size: 11px; color: #666; }
.ast { color: #bbb; margin-left: 1px; }

/* screenshot toolbar */
.shot {
  position: absolute;
  left: 986px;
  top: 739px;
  width: 282px;
  height: 15px;
  z-index: 11;
  background: #eaf0f8;
  border: 1px solid #aab8cc;
  padding-left: 0;
  display: flex;
  align-items: center;
  color: #444;
}
.shot svg { flex: none; width: 18px; height: 11px; fill: none; stroke: #3a3a3a; stroke-width: .8; }
.shot svg:first-child { margin-left: -2px; }
.shot .fill { fill: #3a3a3a; }
.shot-sep { flex: none; width: 1px; height: 9px; background: #b0b8c4; margin: 0 2px; }
.shot-done { font-size: 8px; margin-left: 0; font-weight: 700; }
.mark { position: absolute; left: 1153px; top: 748px; z-index: 12; color: rgba(255,255,255,.32); font-size: 14px; line-height: 20px; white-space: nowrap; letter-spacing: .2px; }
.taskbit { position: absolute; left: 1190px; top: 767px; width: 78px; height: 5px; z-index: 11; background: #f4f4f4; overflow: hidden; font-size: 8px; line-height: 7px; padding-left: 4px; }

/* annotations */
.marks { position: absolute; left: 0; top: 0; width: 1280px; height: 772px; z-index: 10; pointer-events: none; }
.box rect { fill: none; stroke: #fb3a3c; stroke-width: 4; }
.arrow polygon { fill: #fb3a3c; }
```
